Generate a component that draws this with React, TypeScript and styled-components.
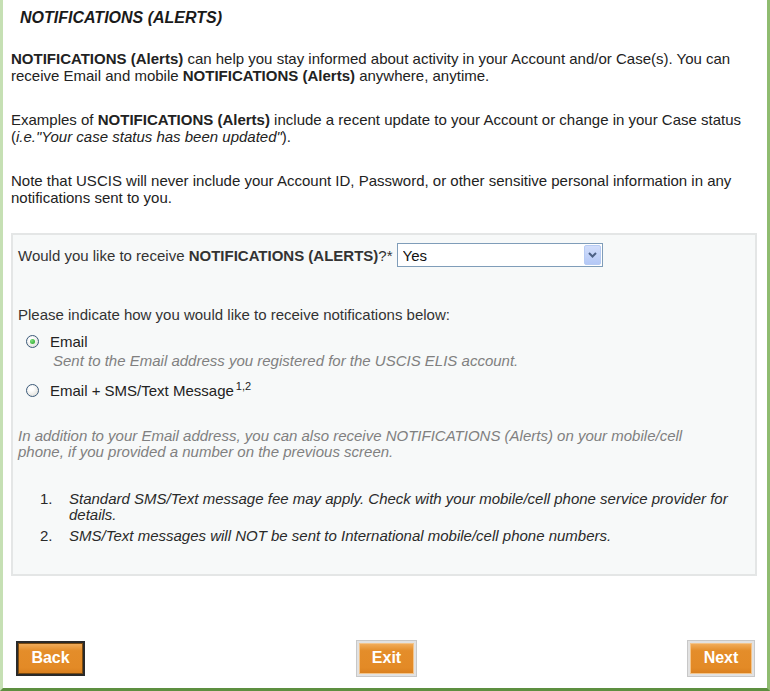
import React from 'react';
import styled, { createGlobalStyle } from 'styled-components';

const GlobalStyle = createGlobalStyle`
  html, body {
    margin: 0;
    padding: 0;
    background: #ffffff;
  }
  body {
    font-family: "Liberation Sans", Arial, sans-serif;
    color: #222222;
  }
`;

const Frame = styled.div`
  width: 770px;
  height: 691px;
  box-sizing: border-box;
  border-left: 3px solid #c6e0b4;
  border-right: 3px solid #8fbc70;
  border-bottom: 3px solid #5d8f40;
  display: flex;
  flex-direction: column;
  background: #fff;
`;

const Content = styled.div`
  padding: 9px 10px 0 8px;
  font-size: 15px;
  line-height: 17px;
`;

const Title = styled.h2`
  margin: 0 0 24px 9px;
  font-size: 16px;
  line-height: 17px;
  font-style: italic;
  font-weight: bold;
  color: #1a1a1a;
`;

const Para = styled.p`
  margin: 0 0 27px 0;
`;

// box with the notification choices, light grey like the old site
const ChoiceBox = styled.div`
  border: 2px solid #e4e6e6;
  background: #f7f9f9;
  height: 343px;
  box-sizing: border-box;
  padding: 7px 5px 0 5px;
  color: #333;
`;

const QuestionRow = styled.div`
  display: flex;
  align-items: center;
  gap: 4px;
  height: 26px;
`;

const SelectWrap = styled.div`
  position: relative;
  width: 206px;
  height: 24px;
`;

const Select = styled.select`
  appearance: none;
  width: 100%;
  height: 100%;
  box-sizing: border-box;
  border: 1px solid #7f9db9;
  background: #fff;
  font-family: "Liberation Sans", Arial, sans-serif;
  font-size: 15px;
  color: #111;
  padding: 0 0 0 5px;
  border-radius: 0;
  outline: none;
`;

const DropArrow = styled.span`
  position: absolute;
  top: 2px;
  right: 2px;
  width: 17px;
  height: 20px;
  box-sizing: border-box;
  border: 1px solid #b7cbf3;
  border-radius: 2px;
  background: linear-gradient(#d2defb, #b4c8f6);
  display: flex;
  align-items: center;
  justify-content: center;
  pointer-events: none;
`;

const Instruction = styled.div`
  margin-top: 38px;
`;

const RadioList = styled.div`
  margin: 9px 0 0 8px;
  display: flex;
  flex-direction: column;
`;

const RadioRow = styled.label`
  display: flex;
  align-items: center;
  gap: 11px;
  height: 18px;
  font-size: 15px;
  color: #222;
`;

const RadioDot = styled.span<{ checked?: boolean }>`
  width: 13px;
  height: 13px;
  flex-shrink: 0;
  box-sizing: border-box;
  border-radius: 50%;
  border: 1px solid #3b5a7a;
  background: radial-gradient(circle at 40% 35%, #ffffff 20%, #dcdcd6 90%);
  display: flex;
  align-items: center;
  justify-content: center;

  &::after {
    content: '';
    display: ${p => (p.checked ? 'block' : 'none')};
    width: 5px;
    height: 5px;
    border-radius: 50%;
    background: radial-gradient(circle at 35% 35%, #7fe07f, #21a121);
  }
`;

const RadioHint = styled.div`
  margin: 2px 0 12px 27px;
  font-style: italic;
  color: #808080;
`;

const Sup = styled.sup`
  font-size: 11px;
  line-height: 0;
  vertical-align: 6px;
  margin-left: 2px;
`;

const GreyNote = styled.p`
  margin: 29px 0 0 0;
  max-width: 708px;
  font-style: italic;
  color: #808080;
  line-height: 16px;
`;

const FootList = styled.ol`
  margin: 31px 0 0 0;
  padding: 0;
  list-style: none;
  display: flex;
  flex-direction: column;
  gap: 5px;
`;

const FootItem = styled.li`
  display: flex;
  font-style: italic;
  line-height: 16px;
  color: #2a2a2a;
`;

const FootNum = styled.span`
  width: 29px;
  padding-left: 22px;
  flex-shrink: 0;
  font-style: normal;
`;

const ButtonBar = styled.div`
  margin-top: auto;
  display: flex;
  justify-content: space-between;
  align-items: center;
  padding: 0 13px 12px 13px;
`;

const NavButton = styled.button<{ focused?: boolean; w: number }>`
  width: ${p => p.w}px;
  height: 35px;
  box-sizing: border-box;
  border: 2px solid ${p => (p.focused ? '#2a2a2a' : '#e2e2e2')};
  box-shadow: ${p => (p.focused ? 'inset 0 0 0 1px #7a4a10' : 'inset 0 0 0 1px #f3c48a, 0 0 0 1px #c8c8c8')};
  background: linear-gradient(#f2b061 0%, #e48d2a 25%, #e38a26 80%, #d87e1d 100%);
  color: #fff;
  font-family: "Liberation Sans", Arial, sans-serif;
  font-size: 16px;
  font-weight: bold;
  padding: 0 0 2px 0;
  cursor: pointer;
`;

const footnotes = [
  'Standard SMS/Text message fee may apply. Check with your mobile/cell phone service provider for details.',
  'SMS/Text messages will NOT be sent to International mobile/cell phone numbers.',
];

const App: React.FC = () => {
  return (
    <>
      <GlobalStyle />
      <Frame>
        <Content>
          <Title>NOTIFICATIONS (ALERTS)</Title>
          <Para>
            <b>NOTIFICATIONS (Alerts)</b> can help you stay informed about activity in your Account and/or Case(s). You can
            receive Email and mobile <b>NOTIFICATIONS (Alerts)</b> anywhere, anytime.
          </Para>
          <Para>
            Examples of <b>NOTIFICATIONS (Alerts)</b> include a recent update to your Account or change in your Case status
            (<i>i.e."Your case status has been updated"</i>).
          </Para>
          <Para>
            Note that USCIS will never include your Account ID, Password, or other sensitive personal information in any
            notifications sent to you.
          </Para>

          <ChoiceBox>
            <QuestionRow>
              <span>
                Would you like to receive <b>NOTIFICATIONS (ALERTS)</b>?*
              </span>
              <SelectWrap>
                <Select defaultValue="yes">
                  <option value="yes">Yes</option>
                  <option value="no">No</option>
                </Select>
                <DropArrow>
                  <svg width="9" height="6" viewBox="0 0 9 6">
                    <path d="M1 1 L4.5 4.5 L8 1" fill="none" stroke="#4d6185" strokeWidth="2" />
                  </svg>
                </DropArrow>
              </SelectWrap>
            </QuestionRow>

            <Instruction>Please indicate how you would like to receive notifications below:</Instruction>

            <RadioList>
              <RadioRow>
                <RadioDot checked />
                Email
              </RadioRow>
              <RadioHint>Sent to the Email address you registered for the USCIS ELIS account.</RadioHint>
              <RadioRow>
                <RadioDot />
                <span>
                  Email + SMS/Text Message<Sup>1,2</Sup>
                </span>
              </RadioRow>
            </RadioList>

            <GreyNote>
              In addition to your Email address, you can also receive NOTIFICATIONS (Alerts) on your mobile/cell
              phone, if you provided a number on the previous screen.
            </GreyNote>

            <FootList>
              {footnotes.map((note, i) => (
                <FootItem key={i}>
                  <FootNum>{i + 1}.</FootNum>
                  <span>{note}</span>
                </FootItem>
              ))}
            </FootList>
          </ChoiceBox>
        </Content>

        <ButtonBar>
          <NavButton focused w={69}>Back</NavButton>
          <NavButton w={59}>Exit</NavButton>
          <NavButton w={66}>Next</NavButton>
        </ButtonBar>
      </Frame>
    </>
  );
};

export default App;
